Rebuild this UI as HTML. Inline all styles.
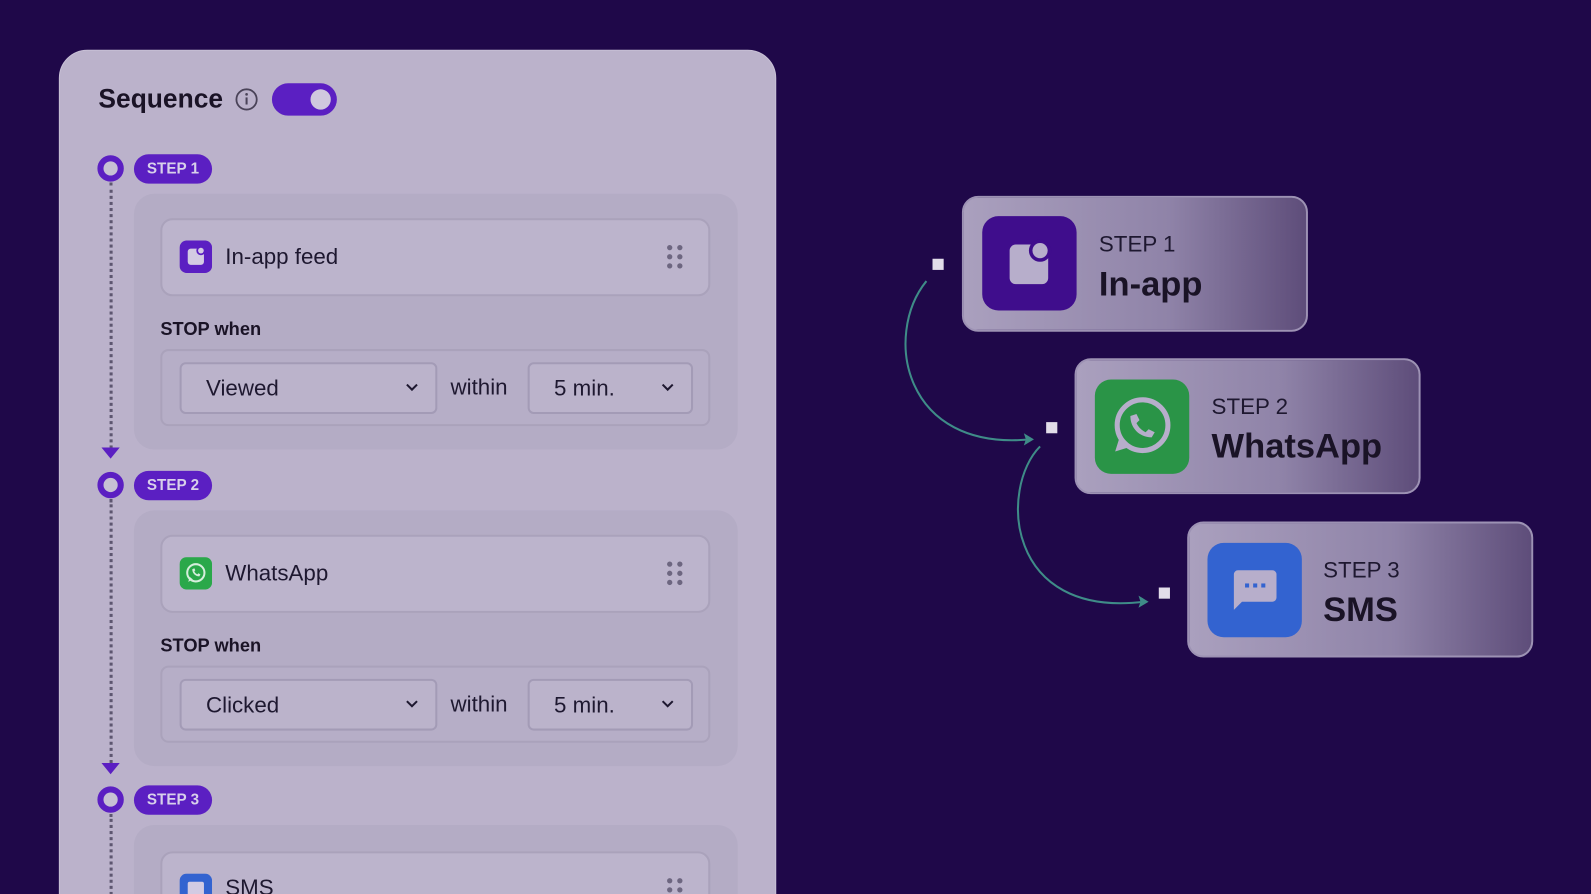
<!DOCTYPE html>
<html><head><meta charset="utf-8"><style>
html,body{margin:0;padding:0;background:#1f0849;overflow:hidden;width:1591px;height:894px;position:relative}
#w{position:absolute;left:0;top:0;width:1568px;height:881px;overflow:hidden;transform:scale(1.0147);transform-origin:0 0;font-family:"Liberation Sans",sans-serif}
.a{position:absolute}
.panel{left:58px;top:49px;width:707px;height:900px;background:#bbb2cb;border-radius:28px;border:1px solid #c8c0d6;box-sizing:border-box}
.title{left:97px;top:82px;font-size:26px;font-weight:bold;color:#1a1326}
.grp{left:132px;width:595px;height:252px;background:#b4acc5;border-radius:20px}
.card{left:158px;width:542px;height:77px;background:#bcb4cc;border:2px solid #aaa2bb;border-radius:12px;box-sizing:border-box}
.ct{font-size:22px;color:#1e1830}
.stop{left:158px;font-size:18px;font-weight:bold;color:#1a1326}
.row{left:158px;width:542px;height:76px;border:2px solid #aaa2bb;border-radius:8px;box-sizing:border-box;background:#b6aec7}
.sel{height:51px;border:2px solid #a39bb6;border-radius:6px;box-sizing:border-box;background:#bbb3cb;font-size:22px;color:#1e1830;line-height:47px;padding-left:24px}
.chev{position:absolute;right:16px;top:18px}
.within{font-size:22px;color:#1e1830}
.dot{left:96px;width:26px;height:26px;border-radius:50%;background:#5b1fc2;box-sizing:border-box;border:7px solid #5b1fc2}
.dot::after{content:"";position:absolute;left:-1px;top:-1px;width:14px;height:14px;border-radius:50%;background:#c7c1d4}
.badge{left:132px;height:29px;width:77px;background:#5b1fc2;border-radius:15px;color:#d8d0ea;font-size:15px;font-weight:bold;text-align:center;line-height:29px}
.vline{left:108px;width:0;border-left:3px dotted #5d5670}
.arr{left:100px;width:0;height:0;border-left:9px solid transparent;border-right:9px solid transparent;border-top:11px solid #5b1fc2}
.drag{width:18px;height:26px}
.rc{width:341px;height:134px;border-radius:16px;border:2px solid #9d92b4;box-sizing:border-box;background:linear-gradient(90deg,#aaa0be 0%,#8f83a8 60%,#5e4d7a 100%)}
.ic{width:93px;height:93px;border-radius:16px}
.s{font-size:22px;color:#1e1830}
.b{font-size:34px;font-weight:bold;color:#1a1326}
.sq{width:11px;height:11px;background:#e2dde9}
</style></head><body><div id="w">
<div class="a panel"></div>
<div class="a title">Sequence</div>
<svg class="a" style="left:231px;top:86px" width="24" height="24" viewBox="0 0 24 24"><circle cx="12" cy="12" r="10" fill="none" stroke="#4a4358" stroke-width="1.8"/><rect x="11" y="10" width="2" height="7" fill="#4a4358"/><circle cx="12" cy="7" r="1.3" fill="#4a4358"/></svg>
<div class="a" style="left:268px;top:82px;width:64px;height:32px;border-radius:16px;background:#5b1fc2"></div>
<div class="a" style="left:306px;top:88px;width:20px;height:20px;border-radius:50%;background:#d0c8de"></div>

<div class="a vline" style="top:180px;height:262px"></div>
<div class="a arr" style="top:441px"></div>
<div class="a vline" style="top:492px;height:260px"></div>
<div class="a arr" style="top:752px"></div>
<div class="a vline" style="top:802px;height:80px"></div>

<div class="a dot" style="top:153px"></div><div class="a badge" style="top:152px">STEP 1</div>
<div class="a dot" style="top:465px"></div><div class="a badge" style="top:464px">STEP 2</div>
<div class="a dot" style="top:775px"></div><div class="a badge" style="top:774px">STEP 3</div>

<div class="a grp" style="top:191px"></div>
<div class="a card" style="top:215px"></div>
<svg class="a" style="left:177px;top:237px" width="32" height="32" viewBox="0 0 32 32"><rect width="32" height="32" rx="7" fill="#5b1fc2"/><rect x="8" y="8" width="16" height="16" rx="3" fill="#d3cbe3"/><circle cx="21" cy="10" r="4.5" fill="#5b1fc2"/><circle cx="21" cy="10" r="2.8" fill="#d3cbe3"/></svg>
<div class="a ct" style="left:222px;top:240px">In-app feed</div>
<svg class="a drag" style="left:656px;top:240px" viewBox="0 0 18 26"><g fill="#6d6680"><circle cx="4" cy="4" r="2.6"/><circle cx="14" cy="4" r="2.6"/><circle cx="4" cy="13" r="2.6"/><circle cx="14" cy="13" r="2.6"/><circle cx="4" cy="22" r="2.6"/><circle cx="14" cy="22" r="2.6"/></g></svg>
<div class="a stop" style="top:314px">STOP when</div>
<div class="a row" style="top:344px"></div>
<div class="a sel" style="left:177px;top:357px;width:254px">Viewed<svg class="chev" width="14" height="10" viewBox="0 0 14 10"><path d="M2 2l5 5 5-5" fill="none" stroke="#1e1830" stroke-width="2"/></svg></div>
<div class="a within" style="left:444px;top:369px">within</div>
<div class="a sel" style="left:520px;top:357px;width:163px">5 min.<svg class="chev" width="14" height="10" viewBox="0 0 14 10"><path d="M2 2l5 5 5-5" fill="none" stroke="#1e1830" stroke-width="2"/></svg></div>

<div class="a grp" style="top:503px"></div>
<div class="a card" style="top:527px"></div>
<svg class="a" style="left:177px;top:549px" width="32" height="32" viewBox="0 0 32 32"><rect width="32" height="32" rx="7" fill="#2aa84a"/><circle cx="16" cy="15.5" r="8.5" fill="none" stroke="#d6eedc" stroke-width="2"/><path d="M8.5 24.5l1.5-5 3 2.5z" fill="#d6eedc"/><path d="M12.5 12c0 4 3 7 7 7l1-2-2-1-1 1c-1.5-.6-2.5-1.6-3-3l1-1-1-2z" fill="#d6eedc"/></svg>
<div class="a ct" style="left:222px;top:552px">WhatsApp</div>
<svg class="a drag" style="left:656px;top:552px" viewBox="0 0 18 26"><g fill="#6d6680"><circle cx="4" cy="4" r="2.6"/><circle cx="14" cy="4" r="2.6"/><circle cx="4" cy="13" r="2.6"/><circle cx="14" cy="13" r="2.6"/><circle cx="4" cy="22" r="2.6"/><circle cx="14" cy="22" r="2.6"/></g></svg>
<div class="a stop" style="top:626px">STOP when</div>
<div class="a row" style="top:656px"></div>
<div class="a sel" style="left:177px;top:669px;width:254px">Clicked<svg class="chev" width="14" height="10" viewBox="0 0 14 10"><path d="M2 2l5 5 5-5" fill="none" stroke="#1e1830" stroke-width="2"/></svg></div>
<div class="a within" style="left:444px;top:681px">within</div>
<div class="a sel" style="left:520px;top:669px;width:163px">5 min.<svg class="chev" width="14" height="10" viewBox="0 0 14 10"><path d="M2 2l5 5 5-5" fill="none" stroke="#1e1830" stroke-width="2"/></svg></div>

<div class="a grp" style="top:813px"></div>
<div class="a card" style="top:839px"></div>
<svg class="a" style="left:177px;top:861px" width="32" height="32" viewBox="0 0 32 32"><rect width="32" height="32" rx="7" fill="#3363d0"/><rect x="8" y="8" width="16" height="14" rx="2" fill="#d3cbe3"/></svg>
<div class="a ct" style="left:222px;top:862px">SMS</div>
<svg class="a drag" style="left:656px;top:864px" viewBox="0 0 18 26"><g fill="#6d6680"><circle cx="4" cy="4" r="2.6"/><circle cx="14" cy="4" r="2.6"/><circle cx="4" cy="13" r="2.6"/><circle cx="14" cy="13" r="2.6"/></g></svg>

<svg class="a" style="left:0;top:0" width="1568" height="881"><g fill="none" stroke="#3f8c88" stroke-width="2"><path d="M913 277C870 330 890 445 1015 433"/><path d="M1025 440C985 480 990 610 1128 593"/></g><path d="M1019 433l-10-6 2 6-2 6z" fill="#3f8c88"/><path d="M1132 593l-10-6 2 6-2 6z" fill="#3f8c88"/></svg>
<div class="a sq" style="left:919px;top:255px"></div>
<div class="a sq" style="left:1031px;top:416px"></div>
<div class="a sq" style="left:1142px;top:579px"></div>

<div class="a rc" style="left:948px;top:193px"></div>
<div class="a ic" style="left:968px;top:213px;background:#3f0d8c"></div>
<svg class="a" style="left:968px;top:213px" width="93" height="93" viewBox="0 0 93 93"><rect x="27" y="28" width="38" height="39" rx="6" fill="#b7aecb"/><circle cx="57" cy="34" r="11" fill="#3f0d8c"/><circle cx="57" cy="34" r="7.5" fill="#b7aecb"/></svg>
<div class="a s" style="left:1083px;top:228px">STEP 1</div>
<div class="a b" style="left:1083px;top:261px">In-app</div>

<div class="a rc" style="left:1059px;top:353px"></div>
<div class="a ic" style="left:1079px;top:374px;background:#2a9447"></div>
<svg class="a" style="left:1079px;top:374px" width="93" height="93" viewBox="0 0 93 93"><circle cx="47" cy="45" r="25" fill="none" stroke="#b7aecb" stroke-width="5"/><path d="M20 71l5-16 11 11z" fill="#b7aecb"/><path d="M35 36c0 12 9 21 21 21l3-5-6-3-3 3c-4-2-7-5-9-9l3-3-3-6z" fill="#b7aecb"/></svg>
<div class="a s" style="left:1194px;top:388px">STEP 2</div>
<div class="a b" style="left:1194px;top:421px">WhatsApp</div>

<div class="a rc" style="left:1170px;top:514px"></div>
<div class="a ic" style="left:1190px;top:535px;background:#3363d0"></div>
<svg class="a" style="left:1190px;top:535px" width="93" height="93" viewBox="0 0 93 93"><path d="M26 31a4 4 0 0 1 4-4h34a4 4 0 0 1 4 4v23a4 4 0 0 1-4 4H34l-8 8z" fill="#b7aecb"/><g fill="#3363d0"><rect x="37" y="40" width="4" height="4"/><rect x="45" y="40" width="4" height="4"/><rect x="53" y="40" width="4" height="4"/></g></svg>
<div class="a s" style="left:1304px;top:549px">STEP 3</div>
<div class="a b" style="left:1304px;top:582px">SMS</div>
</div></body></html>
